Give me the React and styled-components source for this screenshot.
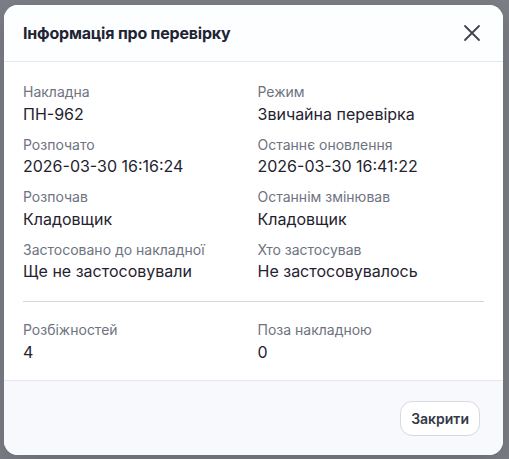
import React from 'react';
import styled, { createGlobalStyle } from 'styled-components';

const GlobalStyle = createGlobalStyle`
  html, body {
    margin: 0;
    padding: 0;
    background: #7b7e86;
    font-family: Inter, "Noto Sans", "Liberation Sans", sans-serif;
  }
`;

const fields = [
  { label: 'Накладна', value: 'ПН-962' },
  { label: 'Режим', value: 'Звичайна перевірка' },
  { label: 'Розпочато', value: '2026-03-30 16:16:24' },
  { label: 'Останнє оновлення', value: '2026-03-30 16:41:22' },
  { label: 'Розпочав', value: 'Кладовщик' },
  { label: 'Останнім змінював', value: 'Кладовщик' },
  { label: 'Застосовано до накладної', value: 'Ще не застосовували' },
  { label: 'Хто застосував', value: 'Не застосовувалось' },
];

const stats = [
  { label: 'Розбіжностей', value: '4' },
  { label: 'Поза накладною', value: '0' },
];

const App = () => (
  <>
    <GlobalStyle />
    <Page>
      <Dialog>
        <Header>
          <Title>Інформація про перевірку</Title>
          <CloseButton aria-label="Закрити">
            <svg width="18" height="18" viewBox="0 0 18 18" fill="none" stroke="#3f4350" strokeWidth="1.8" strokeLinecap="round">
              <path d="M2 2L16 16M16 2L2 16" />
            </svg>
          </CloseButton>
        </Header>
        <Body>
          <Grid>
            {fields.map((f) => (
              <Field key={f.label}>
                <Label>{f.label}</Label>
                <Value>{f.value}</Value>
              </Field>
            ))}
          </Grid>
          <Divider />
          <Grid>
            {stats.map((f) => (
              <Field key={f.label}>
                <Label>{f.label}</Label>
                <Value>{f.value}</Value>
              </Field>
            ))}
          </Grid>
        </Body>
        <Footer>
          <Button>Закрити</Button>
        </Footer>
      </Dialog>
    </Page>
  </>
);

const Page = styled.div`
  width: 509px;
  height: 459px;
  padding: 5px 0 0 4px;
  box-sizing: border-box;
`;

const Dialog = styled.div`
  width: 499px;
  height: 450px;
  background: #ffffff;
  border-radius: 14px;
  overflow: hidden;
  display: flex;
  flex-direction: column;
  box-shadow: 0 10px 30px rgba(0, 0, 0, 0.15);
`;

const Header = styled.div`
  height: 57px;
  box-sizing: border-box;
  display: flex;
  align-items: center;
  justify-content: space-between;
  padding: 0 18px 0 19px;
  background: #fdfeff;
  border-bottom: 1px solid #e4e7ec;
`;

const Title = styled.h2`
  margin: 0;
  font-size: 16px;
  font-weight: 700;
  color: #1e2433;
  letter-spacing: -0.2px;
`;

const CloseButton = styled.button`
  border: none;
  background: none;
  padding: 0;
  width: 26px;
  height: 26px;
  display: flex;
  align-items: center;
  justify-content: center;
  cursor: pointer;
`;

const Body = styled.div`
  padding: 20px 19px 16px;
  display: flex;
  flex-direction: column;
`;

const Grid = styled.div`
  display: grid;
  grid-template-columns: 1fr 1fr;
  column-gap: 8px;
  row-gap: 9px;
`;

const Field = styled.div`
  display: flex;
  flex-direction: column;
`;

const Label = styled.span`
  font-size: 14px;
  line-height: 19.6px;
  color: #6e7380;
`;

const Value = styled.span`
  font-size: 16px;
  line-height: 24px;
  color: #1f2330;
`;

const Divider = styled.hr`
  border: none;
  border-top: 1px solid #d3d6dc;
  margin: 18px 0 18px;
`;

const Footer = styled.div`
  flex: 1;
  display: flex;
  justify-content: flex-end;
  align-items: flex-start;
  padding: 20px 23px 0 0;
  background: #f7f9fc;
  border-top: 1px solid #e4e8ee;
`;

const Button = styled.button`
  height: 35px;
  padding: 0 10px;
  border: 1px solid #d5d9e0;
  border-radius: 12px;
  background: #ffffff;
  font-family: inherit;
  font-size: 14px;
  font-weight: 600;
  color: #343946;
  cursor: pointer;
`;

export default App;
